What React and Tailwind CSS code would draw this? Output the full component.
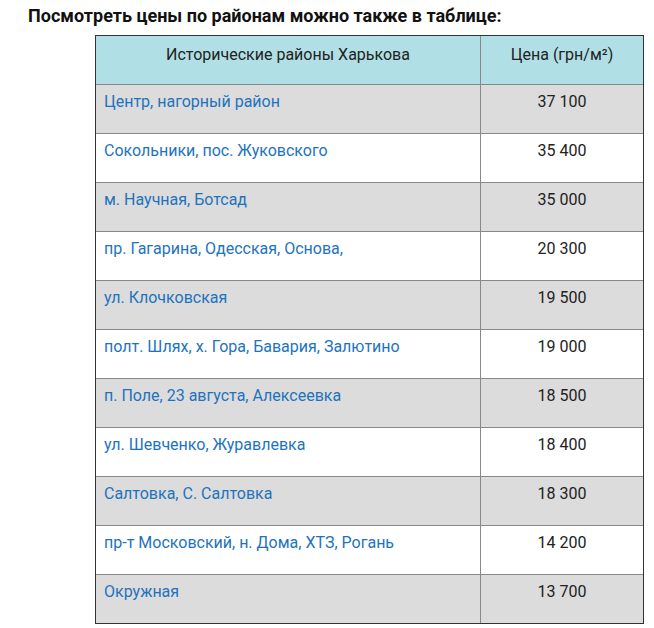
const rows = [
  ["Центр, нагорный район", "37 100"],
  ["Сокольники, пос. Жуковского", "35 400"],
  ["м. Научная, Ботсад", "35 000"],
  ["пр. Гагарина, Одесская, Основа,", "20 300"],
  ["ул. Клочковская", "19 500"],
  ["полт. Шлях, х. Гора, Бавария, Залютино", "19 000"],
  ["п. Поле, 23 августа, Алексеевка", "18 500"],
  ["ул. Шевченко, Журавлевка", "18 400"],
  ["Салтовка, С. Салтовка", "18 300"],
  ["пр-т Московский, н. Дома, ХТЗ, Рогань", "14 200"],
  ["Окружная", "13 700"],
]

export default function App() {
  return (
    <div className="bg-white w-[654px] h-[628px] overflow-hidden font-['Roboto',sans-serif]">
      <h2 className="pl-[28px] pt-[4px] text-[18px] leading-[24px] font-bold text-[#111]">
        Посмотреть цены по районам можно также в таблице:
      </h2>

      <div className="ml-[95px] mt-[7px] w-[549px] border border-[#333]">
        <div className="flex h-[48px] bg-[#b0dfe5] text-[16px] leading-[20px] text-[#222]">
          <div className="w-[385px] border-r border-[#888] text-center pt-[9px]">Исторические районы Харькова</div>
          <div className="flex-1 text-center pt-[9px]">Цена (грн/м²)</div>
        </div>
        {rows.map(([district, price], i) => (
          <div key={i} className={`flex h-[49px] border-t border-[#888] text-[16px] leading-[20px] ${i % 2 === 0 ? "bg-[#dcdcdc]" : "bg-white"}`}>
            <div className="w-[385px] border-r border-[#888] pl-[8px] pt-[7px] text-[#1e73be]">{district}</div>
            <div className="flex-1 text-center pt-[7px] text-[#222]">{price}</div>
          </div>
        ))}
      </div>
    </div>
  )
}
